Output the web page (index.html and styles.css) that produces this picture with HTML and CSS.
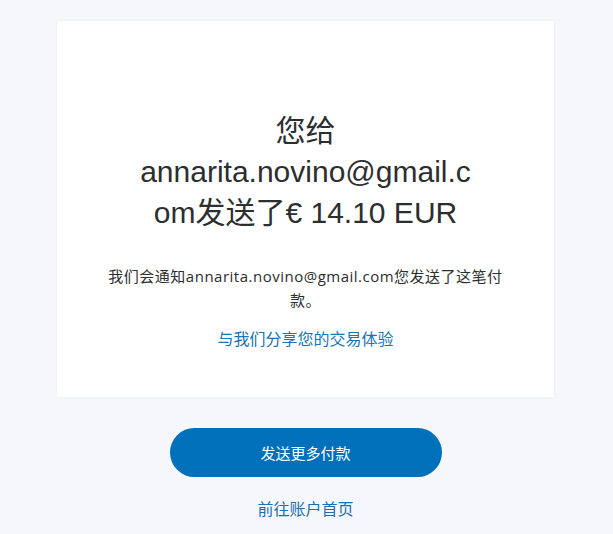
FILE: index.html
```html
<!DOCTYPE html>
<html lang="zh-CN">
<head>
    <meta charset="UTF-8">
    <title>付款已发送</title>
    <link rel="stylesheet" href="styles.css">
</head>
<body>
    <div class="page">
        <div class="card">
            <h1 class="title">您给annarita.novino@gmail.com发送了€ 14.10 EUR</h1>
            <p class="note">我们会通知annarita.novino@gmail.com您发送了这笔付款。</p>
            <a class="feedback" href="#">与我们分享您的交易体验</a>
        </div>
        <button class="send-more">发送更多付款</button>
        <a class="home" href="#">前往账户首页</a>
    </div>
</body>
</html>
```

FILE: styles.css
```css
body {
    margin: 0;
    background: #f5f7fa;
    color: #2c2e2f;
    font-family: "Open Sans", "Noto Sans CJK SC", sans-serif;
}

.page {
    display: flex;
    flex-direction: column;
    align-items: center;
    padding: 21px 2px 0 0;
}

.card {
    width: 497px;
    box-sizing: border-box;
    background: #fff;
    box-shadow: 0 0 3px rgba(0, 0, 0, 0.06);
    padding: 89px 20px 46px;
    display: flex;
    flex-direction: column;
    align-items: center;
    text-align: center;
}

.title {
    max-width: 340px;
    margin: 0;
    font-family: "Liberation Sans", "Noto Sans CJK SC", sans-serif;
    font-size: 30px;
    font-weight: normal;
    line-height: 41px;
    overflow-wrap: break-word;
}

.note {
    max-width: 405px;
    margin: 31px 0 15px;
    font-size: 15px;
    line-height: 24px;
    letter-spacing: 0.5px;
}

.feedback {
    font-size: 16px;
    line-height: 24px;
    color: #1a73b5;
    text-decoration: none;
}

.send-more {
    margin-top: 31px;
    width: 272px;
    height: 49px;
    border: none;
    border-radius: 25px;
    background: #0070ba;
    color: #fff;
    font-family: inherit;
    font-size: 15px;
    cursor: pointer;
}

.home {
    margin-top: 20px;
    font-size: 16px;
    line-height: 24px;
    color: #1a6fb0;
    text-decoration: none;
}
```
